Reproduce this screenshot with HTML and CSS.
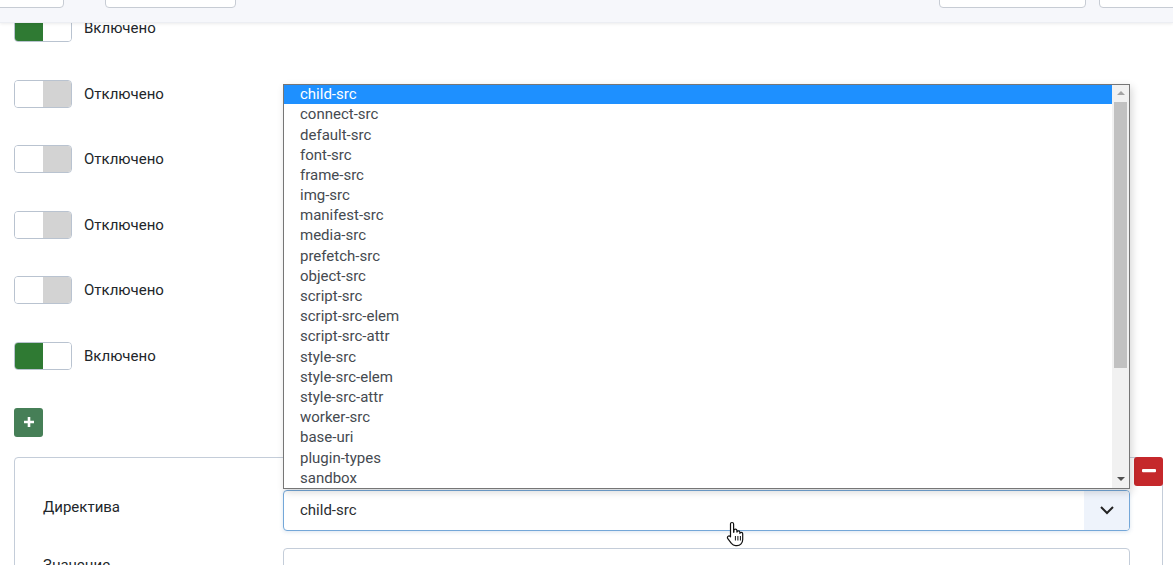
FILE: index.html
```html
<!DOCTYPE html>
<html lang="ru">
<head>
    <meta charset="UTF-8">
    <meta name="viewport" content="width=device-width, initial-scale=1.0">
    <title>CSP</title>
    <link rel="stylesheet" href="styles.css">
</head>
<body>
    <header class="toolbar">
        <div class="toolbar-group">
            <button class="tb-btn tb-first"></button>
            <button class="tb-btn tb-second"></button>
        </div>
        <div class="toolbar-group tb-right">
            <button class="tb-btn tb-third"></button>
            <button class="tb-btn tb-fourth"></button>
        </div>
    </header>

    <main class="page">
        <div class="switch-list">
            <div class="switch-row"><span class="switch on"><i></i><i></i></span><span class="switch-label">Включено</span></div>
            <div class="switch-row"><span class="switch"><i></i><i></i></span><span class="switch-label">Отключено</span></div>
            <div class="switch-row"><span class="switch"><i></i><i></i></span><span class="switch-label">Отключено</span></div>
            <div class="switch-row"><span class="switch"><i></i><i></i></span><span class="switch-label">Отключено</span></div>
            <div class="switch-row"><span class="switch"><i></i><i></i></span><span class="switch-label">Отключено</span></div>
            <div class="switch-row"><span class="switch on"><i></i><i></i></span><span class="switch-label">Включено</span></div>
        </div>

        <button class="btn-add" title="Добавить">
            <svg width="12" height="12" viewBox="0 0 12 12"><path d="M6 1v10M1 6h10" stroke="#fff" stroke-width="2.6"/></svg>
        </button>

        <section class="card">
            <button class="btn-remove" title="Удалить">
                <svg width="14" height="4" viewBox="0 0 14 4"><rect x="0" y="0" width="14" height="3.2" rx="1" fill="#fff"/></svg>
            </button>

            <div class="field">
                <label class="field-label">Директива</label>
                <div class="select-wrap">
                    <div class="listbox">
                        <ul class="options">
                            <li class="selected">child-src</li>
                            <li>connect-src</li>
                            <li>default-src</li>
                            <li>font-src</li>
                            <li>frame-src</li>
                            <li>img-src</li>
                            <li>manifest-src</li>
                            <li>media-src</li>
                            <li>prefetch-src</li>
                            <li>object-src</li>
                            <li>script-src</li>
                            <li>script-src-elem</li>
                            <li>script-src-attr</li>
                            <li>style-src</li>
                            <li>style-src-elem</li>
                            <li>style-src-attr</li>
                            <li>worker-src</li>
                            <li>base-uri</li>
                            <li>plugin-types</li>
                            <li>sandbox</li>
                        </ul>
                        <div class="scrollbar">
                            <span class="arrow up"></span>
                            <div class="track"><div class="thumb"></div></div>
                            <span class="arrow down"></span>
                        </div>
                    </div>
                    <div class="select">
                        <span class="select-value">child-src</span>
                        <span class="select-caret">
                            <svg width="16" height="10" viewBox="0 0 16 10"><path d="M2 2l6 6 6-6" fill="none" stroke="#222" stroke-width="2"/></svg>
                        </span>
                    </div>
                </div>
            </div>

            <div class="field">
                <label class="field-label">Значение</label>
                <input class="text-input" type="text">
            </div>
        </section>
    </main>

    <svg class="cursor" width="20" height="26" viewBox="0 0 20 26">
        <path d="M6 1.5c1 0 1.6.7 1.6 1.6v8.2l.3-.1V9.6c0-.9.7-1.5 1.5-1.5s1.5.6 1.5 1.5v1.5c.1-.8.8-1.3 1.5-1.300.8 0 1.5.6 1.5 1.4v1.2c.2-.7.8-1.1 1.4-1.1.8 0 1.4.6 1.4 1.4v5.8c0 3.3-2.4 6.1-5.8 6.1H9.6c-1.8 0-3.1-.8-4.2-2.2L1.8 17.6c-.6-.8-.5-1.9.3-2.4.7-.5 1.6-.4 2.2.3l.2.3V3.1c0-.9.6-1.600 1.5-1.6z" fill="#fff" stroke="#111" stroke-width="1.2" stroke-linejoin="round"/>
        <path d="M9.4 15v4.5M11.9 15v4.5M14.4 15v4.5" stroke="#111" stroke-width="1"/>
    </svg>
</body>
</html>
```

FILE: styles.css
```css
:root {
    --text-color: #22262a;
    --border-color: #c4cdd9;
    --green: #2f7a33;
    --green-btn: #467f57;
    --red: #c5282b;
    --focus-border: #74a7d8;
}

body {
    margin: 0;
    font-family: Roboto, "Noto Sans", sans-serif;
    font-size: 15px;
    color: var(--text-color);
    background: #ffffff;
    overflow: hidden;
}

/* sticky toolbar lying over the scrolled content */
.toolbar {
    position: fixed;
    top: 0;
    left: 0;
    right: 0;
    height: 22px;
    display: flex;
    justify-content: space-between;
    background: #f6f7fb;
    box-shadow: 0 1px 3px rgba(0, 0, 0, 0.08);
    border-bottom: 1px solid #eceef3;
    overflow: hidden;
    z-index: 5;
}

.toolbar-group {
    display: flex;
    gap: 41px;
}

.tb-right {
    gap: 13px;
    margin-right: -80px;
}

.tb-btn {
    height: 30px;
    margin-top: -22px;
    border: 1px solid #c7ccd4;
    border-radius: 4px;
    background: #ffffff;
    padding: 0;
}

.tb-first { width: 120px; margin-left: -56px; }
.tb-second { width: 131px; }
.tb-third { width: 147px; }
.tb-fourth { width: 154px; }

.page {
    padding: 14px 10px 0 14px;
}

.switch-list {
    display: flex;
    flex-direction: column;
    gap: 37.6px;
}

.switch-row {
    display: flex;
    align-items: center;
    gap: 12px;
}

.switch {
    display: flex;
    width: 58px;
    height: 28px;
    box-sizing: border-box;
    border: 1px solid #b9c3d0;
    border-radius: 4px;
    overflow: hidden;
}

.switch i {
    flex: 1;
    background: #ffffff;
}

.switch i + i {
    background: #d3d3d3;
}

.switch.on i {
    background: var(--green);
}

.switch.on i + i {
    background: #ffffff;
}

.btn-add {
    display: flex;
    align-items: center;
    justify-content: center;
    width: 29px;
    height: 29px;
    margin-top: 38px;
    padding: 0;
    border: none;
    border-radius: 3px;
    background: var(--green-btn);
}

.card {
    position: relative;
    margin-top: 20px;
    border: 1px solid var(--border-color);
    border-radius: 4px;
    padding: 32px 32px 40px 28px;
}

.btn-remove {
    position: absolute;
    top: -1px;
    right: -1px;
    display: flex;
    align-items: center;
    justify-content: center;
    width: 29px;
    height: 29px;
    padding: 0;
    border: none;
    border-radius: 3px;
    background: var(--red);
}

.field {
    display: grid;
    grid-template-columns: 240px 1fr;
    align-items: start;
    margin-bottom: 17px;
}

.field-label {
    font-size: 15px;
    line-height: 18px;
    padding-top: 8px;
}

.select-wrap {
    position: relative;
}

.select {
    display: flex;
    align-items: center;
    height: 41px;
    box-sizing: border-box;
    border: 1px solid var(--focus-border);
    border-radius: 4px;
    overflow: hidden;
    box-shadow: 0 1px 4px rgba(60, 110, 170, 0.18);
    background: #ffffff;
}

.select-value {
    flex: 1;
    padding-left: 16px;
    color: #2a2d31;
}

.select-caret {
    display: flex;
    align-items: center;
    justify-content: center;
    width: 45px;
    height: 100%;
    background: #eef3fb;
}

.text-input {
    height: 41px;
    box-sizing: border-box;
    border: 1px solid var(--border-color);
    border-radius: 4px;
    font: inherit;
}

/* opened select popup */
.listbox {
    position: absolute;
    left: 0;
    right: 0;
    bottom: calc(100% + 1px);
    height: 405px;
    box-sizing: border-box;
    display: flex;
    border: 1px solid #767676;
    background: #ffffff;
    box-shadow: 2px 3px 8px rgba(0, 0, 0, 0.16);
    z-index: 3;
}

.options {
    flex: 1;
    margin: 0;
    padding: 0;
    list-style: none;
    overflow: hidden;
}

.options li {
    height: 20.2px;
    line-height: 20.2px;
    padding-left: 16px;
    color: #454a50;
    white-space: nowrap;
}

.options li.selected {
    height: 19.4px;
    line-height: 19.4px;
    background: #1e90ff;
    color: #ffffff;
}

.scrollbar {
    width: 17px;
    display: flex;
    flex-direction: column;
    background: #f1f1f1;
}

.arrow {
    height: 17px;
    display: flex;
    align-items: center;
    justify-content: center;
}

.arrow::before {
    content: "";
    border-left: 4px solid transparent;
    border-right: 4px solid transparent;
}

.arrow.up::before {
    border-bottom: 4px solid #a3a3a3;
}

.arrow.down::before {
    border-top: 4px solid #505050;
}

.track {
    flex: 1;
    padding: 0 2px;
}

.thumb {
    height: 266px;
    background: #c1c1c1;
}

.cursor {
    position: absolute;
    left: 726px;
    top: 521px;
    z-index: 10;
}
```
